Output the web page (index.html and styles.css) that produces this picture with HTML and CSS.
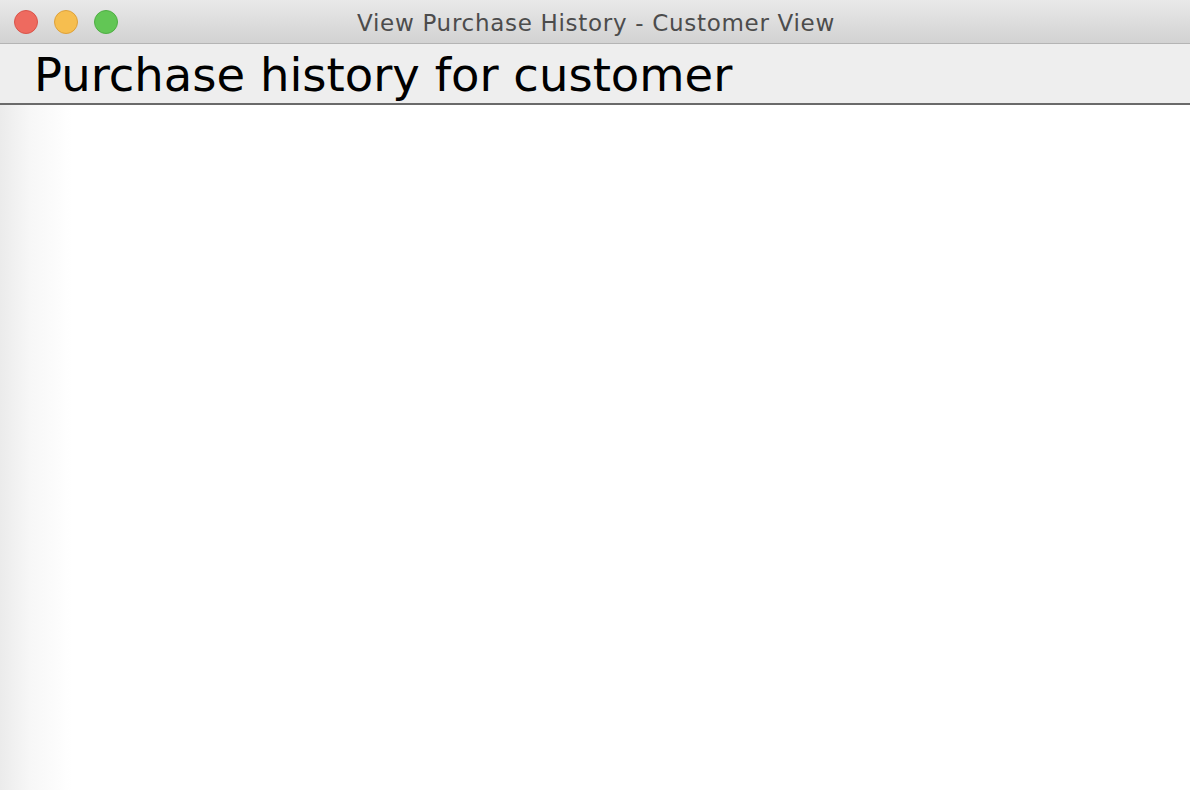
FILE: index.html
```html
<!DOCTYPE html>
<html>
<head>
<meta charset="utf-8">
<link rel="stylesheet" href="styles.css">
</head>
<body>
<div class="window">
  <div class="titlebar">
    <div class="lights">
      <span class="light close"></span>
      <span class="light min"></span>
      <span class="light max"></span>
    </div>
    <div class="title">View Purchase History - Customer View</div>
  </div>
  <div class="header">
    <h1 class="heading">Purchase history for customer</h1>
  </div>
  <div class="content"></div>
</div>
</body>
</html>
```
FILE: styles.css
```css
html, body {
  margin: 0;
  padding: 0;
  width: 1190px;
  height: 790px;
  overflow: hidden;
  background: #fff;
}
.window {
  display: flex;
  flex-direction: column;
  height: 790px;
  font-family: "DejaVu Sans", "Liberation Sans", sans-serif;
}
.titlebar {
  position: relative;
  height: 43px;
  flex: none;
  background: linear-gradient(#e9e9e9, #d2d2d2);
  border-bottom: 1px solid #b4b4b4;
  display: flex;
  align-items: center;
  justify-content: center;
}
.lights {
  position: absolute;
  left: 14px;
  top: 10px;
  display: flex;
  gap: 16px;
}
.light {
  width: 24px;
  height: 24px;
  border-radius: 50%;
  box-sizing: border-box;
}
.close { background: #ee6a5f; border: 1px solid #d9544a; }
.min { background: #f6be4f; border: 1px solid #dea13a; }
.max { background: #62c655; border: 1px solid #4fae44; }
.title {
  font-size: 23px;
  letter-spacing: 0.7px;
  color: #4c4c4c;
  font-family: "DejaVu Sans", "Liberation Sans", sans-serif;
  padding-left: 2px;
  padding-top: 2px;
}
.header {
  flex: none;
  height: 59px;
  background: #eeeeee;
  border-bottom: 2px solid #6a6a6a;
  display: flex;
  align-items: center;
  padding-left: 34px;
}
.heading {
  margin: 0;
  font-weight: normal;
  font-size: 46.5px;
  color: #000;
  line-height: 1;
  padding-top: 4px;
}
.content {
  flex: 1;
  background: linear-gradient(to right, #ebebeb 0px, #f7f7f7 30px, #ffffff 72px);
}
```
